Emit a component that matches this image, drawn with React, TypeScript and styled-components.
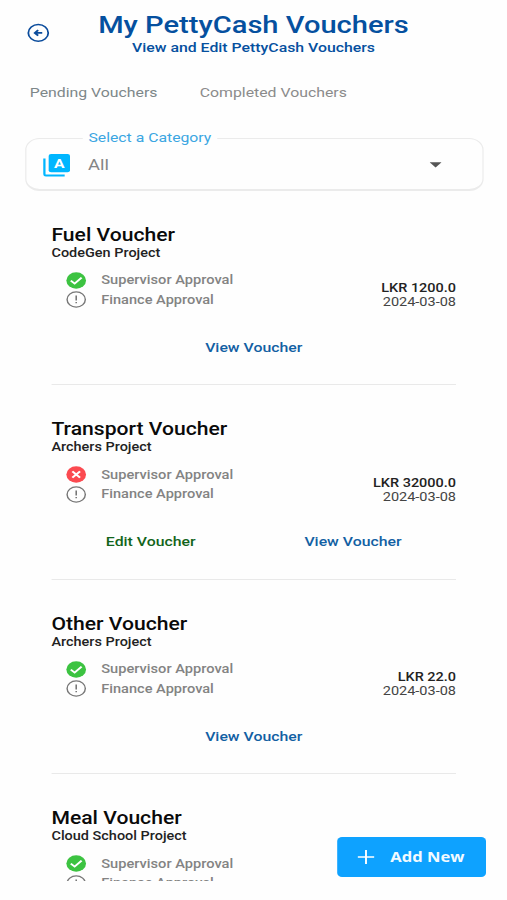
import React from "react";
import styled, { createGlobalStyle } from "styled-components";

const STRETCH = 1.2;

const GlobalStyle = createGlobalStyle`
  * { box-sizing: border-box; }
  html, body { margin: 0; padding: 0; background: #fefefe; overflow: hidden; }
`;

/* The phone layout is shown wider than it is designed. */
const Screen = styled.div`
  width: ${507 / STRETCH}px;
  height: 900px;
  transform: scaleX(${STRETCH});
  transform-origin: 0 0;
  overflow: hidden;
  display: flex;
  flex-direction: column;
  position: relative;
  background: #fefefe;
  font-family: Roboto, "Liberation Sans", sans-serif;
`;

const Text = styled.span<{ $size: number; $line: number; $weight?: number; $color: string }>`
  display: block;
  width: max-content;
  white-space: nowrap;
  font-size: ${(p) => p.$size}px;
  line-height: ${(p) => p.$line}px;
  font-weight: ${(p) => p.$weight ?? 400};
  color: ${(p) => p.$color};
`;

const Header = styled.header`
  display: grid;
  grid-template-columns: 40px 1fr 40px;
  padding: 10.5px 0 0;
  height: 84px;
  flex: none;
`;
const BackButton = styled.button`
  border: 0;
  padding: 0;
  background: none;
  width: 20px;
  height: 20px;
  margin: 12.3px 0 0 21.6px;
  svg { display: block; }
`;
const Titles = styled.div`
  display: flex;
  flex-direction: column;
  align-items: center;
  gap: 1.2px;
`;
const Tabs = styled.nav`
  display: flex;
  gap: 35.2px;
  padding: 0.7px 0 0 24.8px;
  height: 54px;
  flex: none;
`;
const Field = styled.div`
  position: relative;
  margin: 0 0 0 20.5px;
  width: 382.4px;
  height: 53px;
  flex: none;
  border: 1.3px solid #ebebeb;
  border-bottom-width: 2px;
  border-radius: 12px;
  display: flex;
  align-items: center;
  padding: 1px 33.5px 0 13.8px;
`;
const FieldLabel = styled.div`
  position: absolute;
  left: 47.2px;
  top: -9.7px;
  padding: 0 5px;
  background: #fefefe;
`;
const FieldValue = styled.div`
  flex: 1;
  padding-left: 14px;
`;

const List = styled.main`
  height: 690px;
  flex: none;
  padding: 32.6px 42.5px 0 42.9px;
  overflow: hidden;
`;
const Voucher = styled.article`
  height: 194.5px;
`;
const Body = styled.div`
  display: flex;
  justify-content: space-between;
  height: 63px;
  padding-top: 11px;
`;
const Approval = styled.div`
  display: flex;
  align-items: center;
  gap: 12.5px;
  height: 19.5px;
  padding-left: 12px;
  svg { flex: none; }
`;
const Amounts = styled.div`
  display: flex;
  flex-direction: column;
  align-items: flex-end;
  padding-top: 10.7px;
`;
const Actions = styled.div`
  display: flex;
  justify-content: space-around;
  align-items: center;
  height: 62.8px;
  border-bottom: 1.6px solid #e9e9e9;
  padding-bottom: 11.8px;
`;
const AddButton = styled.button`
  position: absolute;
  left: 280.8px;
  top: 837.3px;
  width: 124px;
  height: 39.4px;
  border: 0;
  border-radius: 4px;
  background: #0ea2ff;
  display: flex;
  align-items: center;
  padding: 0 0 0 17.5px;
  gap: 13px;
  font-family: "Open Sans", Lato, sans-serif;
`;

const BackIcon = () => (
  <svg width="20" height="20" viewBox="0 0 20 20" fill="none" stroke="#0b4c9c">
    <circle cx="9.9" cy="9.9" r="8.3" strokeWidth="1.5" />
    <path d="M13.2 9.9H7.4M9.8 7.1L7 9.9L9.8 12.7" strokeWidth="1.7" />
  </svg>
);
const CategoryIcon = () => (
  <svg width="24" height="24" viewBox="1 1 21.6 21.6">
    <rect x="6" y="2" width="16" height="16.4" rx="1.8" fill="#00b6ff" />
    <path d="M2.8 6V20.2a1.1 1.1 0 0 0 1.1 1.1H18" fill="none" stroke="#00b6ff" strokeWidth="1.7" />
    <text x="14" y="14.2" textAnchor="middle" fontSize="11.8" fontWeight="700" fill="#fff">A</text>
  </svg>
);
const StatusIcon = ({ status }: { status: string }) => (
  <svg width="17" height="17" viewBox="0 0 17 17" fill="none">
    {status === "pending" ? (
      <>
        <circle cx="8.5" cy="8.5" r="7.6" stroke="#777" strokeWidth="1.2" />
        <path d="M8.5 4.6V9.4M8.5 10.9V12.3" stroke="#777" strokeWidth="1.3" />
      </>
    ) : (
      <circle cx="8.5" cy="8.5" r="8.2" fill={status === "approved" ? "#3cc341" : "#fb4a50"} />
    )}
    {status === "approved" && <path d="M4 8.7L7.2 11.6L13 5.7" stroke="#fff" strokeWidth="1.8" />}
    {status === "rejected" && <path d="M5.3 5.3L11.7 11.7M11.7 5.3L5.3 11.7" stroke="#fff" strokeWidth="1.9" />}
  </svg>
);

const vouchers = [
  { title: "Fuel Voucher", project: "CodeGen Project", supervisor: "approved", amount: "LKR 1200.0", date: "2024-03-08", editable: false },
  { title: "Transport Voucher", project: "Archers Project", supervisor: "rejected", amount: "LKR 32000.0", date: "2024-03-08", editable: true },
  { title: "Other Voucher", project: "Archers Project", supervisor: "approved", amount: "LKR 22.0", date: "2024-03-08", editable: false },
  { title: "Meal Voucher", project: "Cloud School Project", supervisor: "approved", amount: "", date: "", editable: false },
];

export default function App() {
  return (
    <>
      <GlobalStyle />
      <Screen>
        <Header>
          <BackButton aria-label="Back"><BackIcon /></BackButton>
          <Titles>
            <Text $size={24.25} $line={28} $weight={500} $color="#05509f">My PettyCash Vouchers</Text>
            <Text $size={13.2} $line={16} $weight={500} $color="#05509f">View and Edit PettyCash Vouchers</Text>
          </Titles>
        </Header>
        <Tabs>
          <Text $size={13.2} $line={16} $color="#7d8789">Pending Vouchers</Text>
          <Text $size={13.2} $line={16} $color="#8b8b8b">Completed Vouchers</Text>
        </Tabs>
        <Field>
          <FieldLabel><Text $size={13.15} $line={18} $color="#3ba6e2">Select a Category</Text></FieldLabel>
          <CategoryIcon />
          <FieldValue><Text $size={15.3} $line={20} $color="#858585">All</Text></FieldValue>
          <svg width="10" height="6" viewBox="0 0 10 6"><path d="M0 0.3H10L5 5.6Z" fill="#555" /></svg>
        </Field>
        <List>
          {vouchers.map((v) => (
            <Voucher key={v.title}>
              <Text $size={17.6} $line={22} $weight={500} $color="#0a0a0a">{v.title}</Text>
              <Text $size={12.05} $line={14} $weight={500} $color="#222">{v.project}</Text>
              <Body>
                <div>
                  <Approval>
                    <StatusIcon status={v.supervisor} />
                    <Text $size={12.2} $line={16} $weight={500} $color="#838383">Supervisor Approval</Text>
                  </Approval>
                  <Approval>
                    <StatusIcon status="pending" />
                    <Text $size={12.15} $line={16} $weight={500} $color="#838383">Finance Approval</Text>
                  </Approval>
                </div>
                {v.amount && (
                  <Amounts>
                    <Text $size={12.05} $line={14.2} $weight={500} $color="#222">{v.amount}</Text>
                    <Text $size={12.1} $line={14.2} $color="#444">{v.date}</Text>
                  </Amounts>
                )}
              </Body>
              {v.amount && (
                <Actions>
                  {v.editable && <Text $size={13.2} $line={16} $weight={500} $color="#12641a">Edit Voucher</Text>}
                  <Text $size={13.2} $line={16} $weight={500} $color="#1260a3">View Voucher</Text>
                </Actions>
              )}
            </Voucher>
          ))}
        </List>
        <AddButton>
          <svg width="14" height="14" viewBox="0 0 14 14" stroke="#fff" strokeWidth="1.6"><path d="M0 7H14M7 0V14" /></svg>
          <Text $size={13.8} $line={20} $weight={700} $color="#f2faff">Add New</Text>
        </AddButton>
      </Screen>
    </>
  );
}
